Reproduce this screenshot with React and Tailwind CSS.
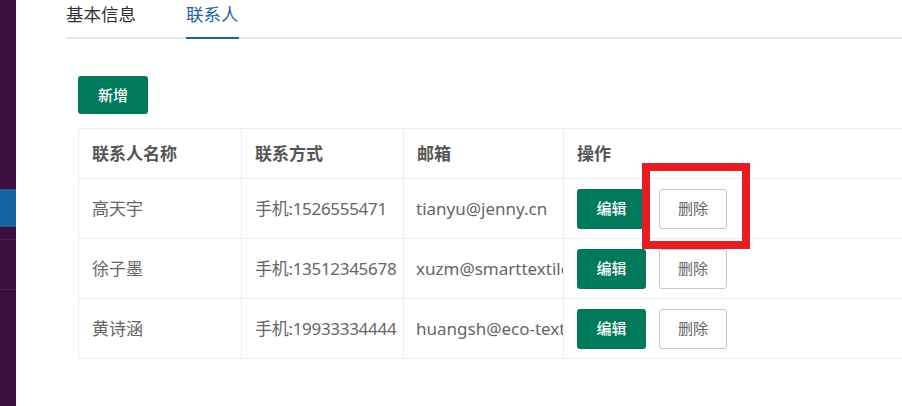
const contacts = [
  { name: "高天宇", phone: "手机:1526555471", email: "tianyu@jenny.cn", flagged: true },
  { name: "徐子墨", phone: "手机:13512345678", email: "xuzm@smarttextile.com" },
  { name: "黄诗涵", phone: "手机:19933334444", email: "huangsh@eco-textile.com" },
];

const font = { fontFamily: '"Noto Sans", "Noto Sans CJK SC", sans-serif' };

const Sidebar = () => (
  <div className="w-4 shrink-0 bg-[#3b0e3e] flex flex-col">
    <div className="h-[189px]" />
    <div className="h-[38px] bg-[#1565a2]" />
    <div className="h-[12px]" />
    <div className="h-px bg-[#4c2350]" />
    <div className="h-[49px]" />
    <div className="h-px bg-[#4c2350]" />
  </div>
);

const Tabs = () => (
  <div className="flex gap-[50px] border-b-2 border-[#e4e7ed] h-[39px]">
    <div className="h-[37px] leading-[28px] text-[17.5px] text-[#303133] cursor-pointer">
      基本信息
    </div>
    <div className="h-[39px] leading-[28px] text-[17.5px] text-[#1a64a5] border-b-2 border-[#1a64a5] -mb-[2px] cursor-pointer">
      联系人
    </div>
  </div>
);

const Cell = ({ children, className = "" }) => (
  <td className={`h-[60px] border border-[#ebeef5] text-[#666] ${className}`}>
    <div className="whitespace-nowrap overflow-hidden">{children}</div>
  </td>
);

const App = () => {
  return (
    <div className="flex h-[406px] w-[902px] overflow-hidden bg-white" style={font}>
      <Sidebar />
      <div className="flex-1 pl-[50px] overflow-hidden">
        <Tabs />
        <div className="pl-[12px]">
          <button className="mt-[37px] w-[70px] h-[38px] rounded-[3px] bg-[#017a5c] text-white text-[15px] font-medium">
            新增
          </button>
          <table className="mt-[14px] table-fixed border-collapse w-[900px] text-[17px]">
            <colgroup>
              <col className="w-[163px]" />
              <col className="w-[162px]" />
              <col className="w-[160px]" />
              <col />
            </colgroup>
            <thead>
              <tr>
                {["联系人名称", "联系方式", "邮箱", "操作"].map((h) => (
                  <th
                    key={h}
                    className="h-[50px] border border-[#ebeef5] px-[13px] text-left font-bold text-[#555]"
                  >
                    {h}
                  </th>
                ))}
              </tr>
            </thead>
            <tbody>
              {contacts.map((c) => (
                <tr key={c.name}>
                  <Cell className="px-[13px]">{c.name}</Cell>
                  <Cell className="pl-[13px] pr-0 tracking-[-0.3px]">{c.phone}</Cell>
                  <Cell className="pl-[12px] pr-0">{c.email}</Cell>
                  <td className="h-[60px] border border-[#ebeef5] px-[13px]">
                    <div className="flex items-center gap-[13px]">
                      <button className="w-[69px] h-[40px] rounded-[3px] bg-[#017a5c] text-white text-[15px] font-medium">
                        编辑
                      </button>
                      <div className="relative">
                        <button className="w-[68px] h-[40px] rounded-[3px] border border-[#c4c6cc] bg-white text-[#666] text-[15px]">
                          删除
                        </button>
                        {/* annotation box */}
                        {c.flagged && (
                          <div className="absolute -left-[17px] -top-[26px] w-[108px] h-[86px] border-[8px] border-[#e51c23] pointer-events-none" />
                        )}
                      </div>
                    </div>
                  </td>
                </tr>
              ))}
            </tbody>
          </table>
        </div>
      </div>
    </div>
  );
};

export default App;
